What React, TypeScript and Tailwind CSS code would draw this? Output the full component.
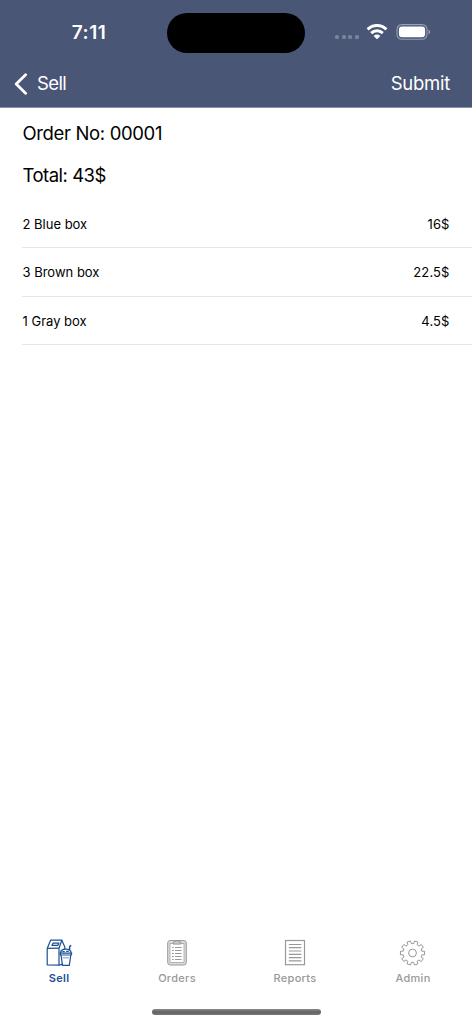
const items = [
  { name: "2 Blue box", price: "16$" },
  { name: "3 Brown box", price: "22.5$" },
  { name: "1 Gray box", price: "4.5$" },
];

export default function App() {
  return (
    <div className="w-[472px] h-[1024px] bg-white flex flex-col overflow-hidden font-['Inter',sans-serif] text-black">
      <header className="h-[108px] shrink-0 bg-[#4a5675] text-white border-b border-[#8b93a8]">
        <StatusBar />
        <div className="h-[35px] flex items-center justify-between pl-[14px] pr-[22px] text-[18.5px]">
          <button className="flex items-center">
            <svg width="14" height="22" viewBox="0 0 14 22" fill="none" stroke="currentColor" strokeWidth="2.8" strokeLinecap="round" strokeLinejoin="round">
              <path d="M11.6 1.8 2.2 11l9.4 9.2" />
            </svg>
            <span className="ml-[9px] tracking-[-0.6px]">Sell</span>
          </button>
          <button className="tracking-[-0.25px]">Submit</button>
        </div>
      </header>

      <main className="flex-1 pl-[22px]">
        <div className="h-[52px] flex items-center text-[18.5px] tracking-[-0.35px] pl-[0.5px]">Order No: 00001</div>
        <div className="h-[32px] flex items-center text-[18.5px] tracking-[-0.5px] pl-[0.5px]">Total: 43$</div>
        <ul className="mt-[7.8px]">
          {items.map((item) => (
            <li
              key={item.name}
              className="h-[48.4px] pt-[2.4px] pl-[0.5px] pr-[22.5px] flex items-center justify-between border-b border-[#e6e6e8] text-[13px]"
            >
              <span>{item.name}</span>
              <span className="tracking-[0.1px]">{item.price}</span>
            </li>
          ))}
        </ul>
      </main>

      <nav className="h-[90px] shrink-0 grid grid-cols-4 text-[11px] font-medium tracking-[0.3px] text-[#999999]">
        <Tab label="Sell" active>
          <SellIcon />
        </Tab>
        <Tab label="Orders">
          <OrdersIcon />
        </Tab>
        <Tab label="Reports">
          <ReportsIcon />
        </Tab>
        <Tab label="Admin">
          <GearIcon />
        </Tab>
      </nav>
      <div className="h-[15px] shrink-0 flex justify-center">
        <div className="w-[169px] h-[6px] rounded-full bg-gradient-to-b from-[#8b8b8b] via-[#626262] to-[#777777]" />
      </div>
    </div>
  );
}

function StatusBar() {
  return (
    <div className="h-[66px] flex items-start">
      <div className="w-[167px] pt-[20px] pl-[11px] text-center text-[19px] leading-[26px] font-semibold tracking-[0.5px]">
        7:11
      </div>
      <div className="mt-[13px] w-[138px] h-[40px] rounded-full bg-black" />
      <div className="ml-[30px] pt-[23px] flex items-center">
        <div className="mt-[11px] flex gap-[2.6px]">
          {[0, 1, 2, 3].map((dot) => (
            <span key={dot} className="w-[4px] h-[4px] rounded-[1.5px] bg-[#7a839b]" />
          ))}
        </div>
        <svg className="ml-[7.5px]" width="22" height="17" viewBox="0 0 22 17" fill="none" stroke="white" strokeWidth="2.9">
          <path d="M1.6 6.4a13.4 13.4 0 0 1 18.8 0" />
          <path d="M5.2 10.1a8.3 8.3 0 0 1 11.6 0" />
          <path d="M11 16.3 7.6 12.9a4.9 4.9 0 0 1 6.8 0z" fill="white" stroke="none" />
        </svg>
        <svg className="ml-[7.5px]" width="35" height="17" viewBox="0 0 35 17">
          <rect x="1" y="1.6" width="30" height="14.6" rx="4.8" fill="none" stroke="#98a0b3" strokeWidth="1.1" />
          <rect x="2.9" y="3.5" width="26.2" height="10.8" rx="3.2" fill="white" />
          <path d="M32.6 6.4v5c2-.8 2-4.2 0-5z" fill="#98a0b3" />
        </svg>
      </div>
    </div>
  );
}

function Tab({ label, active = false, children }: { label: string; active?: boolean; children: React.ReactNode }) {
  return (
    <button className={`pt-[20px] flex flex-col items-center justify-start ${active ? "text-[#1d4f94] font-semibold" : ""}`}>
      <span className="h-[28px]">{children}</span>
      <span className="mt-[3px] leading-[16px]">{label}</span>
    </button>
  );
}

function SellIcon() {
  return (
    <svg width="28" height="28" viewBox="0 0 28 28" fill="none" stroke="currentColor" strokeWidth="1.2" strokeLinejoin="round">
      <path d="M5.6 1.2h11.2L14 9.2v17L2.2 25.8V9.4z" />
      <path d="M2.2 9.4 14 9.2M16.8 1.2l3 6.8v2.2M14 26.2l3.6-1" />
      <path d="M8 4.2l-1 2.2h5.8l1-2.2z" strokeWidth="1.3" />
      <path d="M15.5 14.2c0-2.6 2.2-4 5.2-4s5.4 1.4 5.4 4" fill="white" />
      <path d="M15.1 14.2h11.6l-.4 1.8H15.5zM16 16l1.5 10.4h6.8L25.8 16" />
      <path d="M17.4 12.6h2.3M21.2 12.4h2.6M24.6 11.2V7.6l1.6-1.2" strokeWidth="1.4" />
      <path d="M17.6 18.8h6.4" strokeWidth="0.6" />
    </svg>
  );
}

function OrdersIcon() {
  return (
    <svg width="28" height="28" viewBox="0 0 28 28" fill="none" stroke="currentColor" strokeWidth="1">
      <rect x="4.7" y="1.5" width="18.6" height="24.5" rx="2.5" fill="#dddddd" />
      <rect x="7" y="4.6" width="14" height="19" fill="white" strokeWidth="0.7" />
      <path d="M10.3 5.1V3h1.8c.2-1.7 3.6-1.7 3.8 0h1.9v2.1z" fill="#cccccc" />
      <path d="M9 8.5h1.8M12 8.5h6.6M9 11.5h1.8M12 11.5h6.6M9 14.5h1.8M12 14.5h6.6M9 17.5h1.8M12 17.5h6.6M9 20.5h1.8M12 20.5h6.6" />
    </svg>
  );
}

function ReportsIcon() {
  return (
    <svg width="28" height="28" viewBox="0 0 28 28" fill="none" stroke="currentColor" strokeWidth="1.2">
      <rect x="4.5" y="1.5" width="19" height="24.2" />
      <path d="M7.8 5.5h12.6M7.8 8.7h12.6M7.8 12h12.6M7.8 15.4h12.6M7.8 18.6h12.6M7.8 21.8h12.6" />
    </svg>
  );
}

// Ten teeth around the hub, each one a short run on the outer radius.
function gearPath() {
  const steps: string[] = [];
  for (let i = 0; i < 10; i++) {
    const a = (i * Math.PI) / 5;
    [
      [9.5, -0.19],
      [12.2, -0.15],
      [12.2, 0.15],
      [9.5, 0.19],
    ].forEach(([r, d]) => {
      steps.push(`${(13.5 + r * Math.cos(a + d)).toFixed(2)} ${(14 + r * Math.sin(a + d)).toFixed(2)}`);
    });
  }
  return `M${steps.join("L")}Z`;
}

function GearIcon() {
  return (
    <svg width="28" height="28" viewBox="0 0 28 28" fill="none" stroke="currentColor" strokeWidth="1" strokeLinejoin="round">
      <path d={gearPath()} />
      <circle cx="13.5" cy="14" r="3.9" />
    </svg>
  );
}
